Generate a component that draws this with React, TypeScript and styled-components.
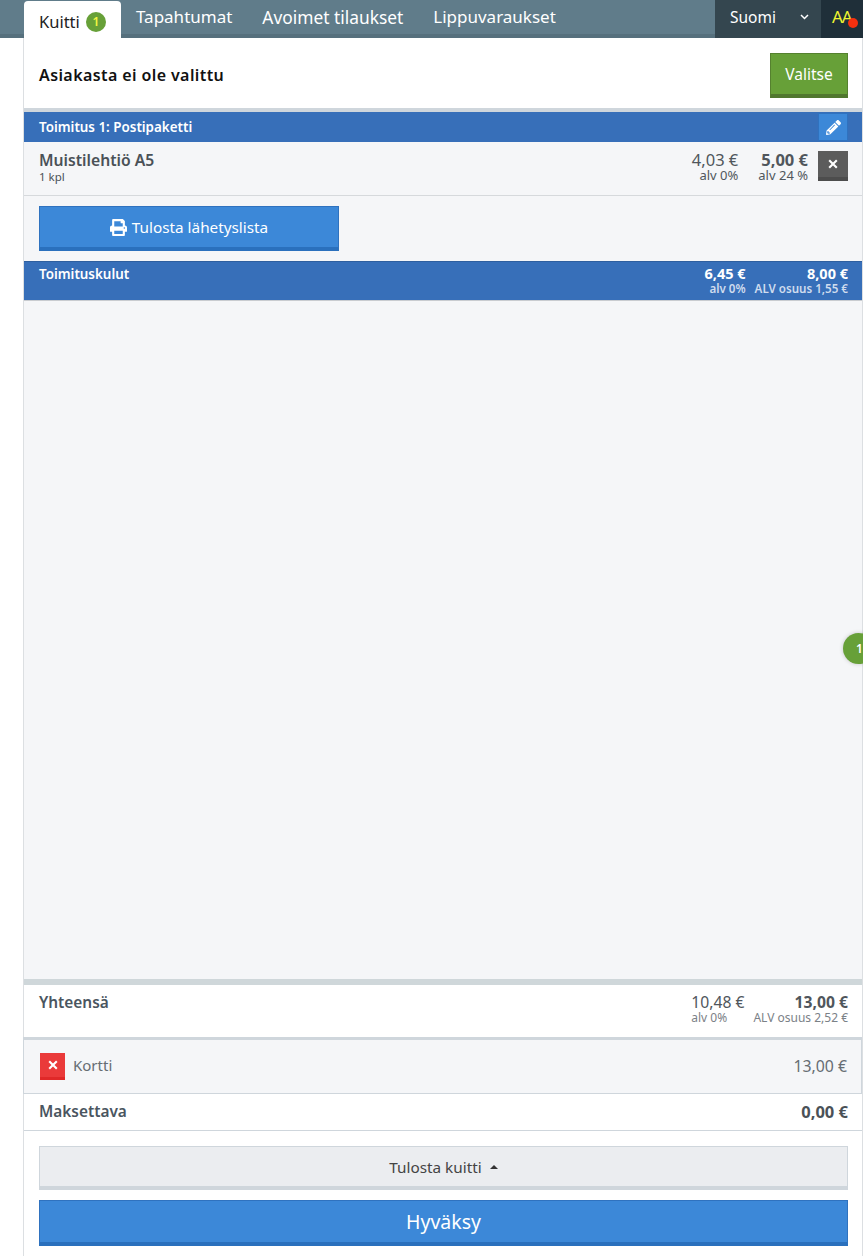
// App.tsx
import React from "react";
import styled, { createGlobalStyle } from "styled-components";
import { FaPrint, FaPencilAlt } from "react-icons/fa";

const GlobalStyle = createGlobalStyle`
  html, body {
    margin: 0;
    padding: 0;
    background: #fff;
    font-family: "Noto Sans", "Open Sans", Arial, sans-serif;
  }
  * { box-sizing: border-box; }
`;

const Page = styled.div`
  position: relative;
  width: 863px;
  height: 1256px;
  display: flex;
  flex-direction: column;
  overflow: hidden;
`;

// Ylapalkki
const TopBar = styled.div`
  height: 38px;
  flex: none;
  display: flex;
  align-items: stretch;
  background: #607c8a;
  border-bottom: 4px solid #56707d;
  padding-left: 24px;
`;

const ActiveTab = styled.div`
  width: 97px;
  height: 37px;
  margin-top: 1px;
  padding: 4px 0 0 15px;
  display: flex;
  align-items: center;
  gap: 6px;
  flex: none;
  background: #fff;
  border-radius: 4px 4px 0 0;
  color: #222;
  font-size: 16.5px;
  position: relative;
  z-index: 1;
`;

const TabBadge = styled.span`
  width: 20px;
  height: 20px;
  border-radius: 50%;
  background: #67a038;
  color: #f2f542;
  font-size: 12px;
  font-weight: 600;
  display: flex;
  align-items: center;
  justify-content: center;
`;

const Tab = styled.div<{ $gap: number; $size?: number }>`
  color: #fff;
  font-size: ${(props) => props.$size || 17}px;
  line-height: 34px;
  margin-left: ${(props) => props.$gap}px;
  flex: none;
`;

const LangSelect = styled.div`
  margin-left: auto;
  width: 106px;
  height: 38px;
  padding: 0 12px 4px 15px;
  display: flex;
  align-items: center;
  justify-content: space-between;
  background: #34464f;
  color: #fff;
  font-size: 15.5px;
`;

const ContrastButton = styled.div`
  position: relative;
  width: 42px;
  height: 38px;
  padding: 6px 0 0 11px;
  background: #1f2f39;
  color: #eef52f;
  font-size: 17px;
  letter-spacing: -1px;
  line-height: 22px;
`;

const RedDot = styled.span`
  position: absolute;
  left: 27px;
  top: 18px;
  width: 10px;
  height: 10px;
  border-radius: 50%;
  background: #f5300f;
`;

// Paasisalto
const Receipt = styled.div`
  flex: 1;
  margin-left: 23px;
  display: flex;
  flex-direction: column;
  border-left: 1px solid #dcdfe2;
  border-right: 1px solid #dcdfe2;
  min-height: 0;
`;

const CustomerRow = styled.div`
  height: 74px;
  flex: none;
  padding: 15px 14px 0 15px;
  display: flex;
  align-items: flex-start;
  justify-content: space-between;
  background: #fff;
  border-bottom: 4px solid #cfd6dc;
`;

const CustomerName = styled.div`
  font-size: 16px;
  font-weight: 600;
  color: #111;
  line-height: 44px;
  letter-spacing: 0.4px;
`;

const GreenButton = styled.div`
  width: 78px;
  height: 45px;
  background: #67a038;
  border: 1px solid #55812f;
  border-bottom: 4px solid #50772e;
  color: #fff;
  font-size: 15.5px;
  display: flex;
  align-items: center;
  justify-content: center;
`;

const DeliveryHeader = styled.div`
  height: 30px;
  flex: none;
  padding: 0 14px 0 15px;
  display: flex;
  align-items: center;
  justify-content: space-between;
  background: #376fb9;
  color: #fff;
  font-size: 13.4px;
  font-weight: 600;
`;

const EditButton = styled.div`
  width: 30px;
  height: 28px;
  margin-bottom: 1px;
  align-self: flex-end;
  background: #3c88d8;
  border: 1px solid #2f72bf;
  color: #fff;
  font-size: 15px;
  display: flex;
  align-items: center;
  justify-content: center;
`;

const ProductRow = styled.div`
  height: 54px;
  flex: none;
  padding: 9px 14px 0 15px;
  display: flex;
  align-items: flex-start;
  background: #f5f6f8;
  border-bottom: 1px solid #d6d9dc;
`;

const ProductInfo = styled.div`
  flex: 1;
  color: #4a5157;
`;

const ProductName = styled.div`
  font-size: 15.7px;
  font-weight: 600;
  line-height: 19px;
`;

const ProductQty = styled.div`
  font-size: 11.5px;
  line-height: 14px;
`;

const PriceCell = styled.div`
  display: flex;
  flex-direction: column;
  align-items: ${(props: { $align?: string }) => props.$align || "flex-end"};
  flex: none;
  white-space: nowrap;
`;

const PriceValue = styled.div<{ $bold?: boolean; $size?: number }>`
  font-size: ${(props) => props.$size || 16}px;
  font-weight: ${(props) => (props.$bold ? 700 : 400)};
  line-height: 17px;
`;

const PriceNote = styled.div`
  font-size: 13px;
  line-height: 14px;
`;

const ProductPrices = styled.div`
  display: flex;
  gap: 20px;
  color: #50565c;
  margin-right: 10px;
`;

const RemoveButton = styled.div`
  width: 30px;
  height: 30px;
  background: #5c5c5c;
  border-bottom: 4px solid #4d4d4d;
  display: flex;
  align-items: center;
  justify-content: center;
`;

const PrintArea = styled.div`
  height: 65px;
  flex: none;
  padding: 10px 15px 0;
  background: #f5f6f8;
`;

const BlueButton = styled.div<{ $width: string; $height: number; $size: number }>`
  width: ${(props) => props.$width};
  height: ${(props) => props.$height}px;
  flex: none;
  background: #3c88d8;
  border: 1px solid #2f72bf;
  border-bottom: 4px solid #2a70bd;
  color: #fff;
  font-size: ${(props) => props.$size}px;
  display: flex;
  align-items: center;
  justify-content: center;
  gap: 5px;
`;

const ShippingRow = styled.div`
  height: 40px;
  flex: none;
  padding: 3px 14px 0 15px;
  display: flex;
  align-items: flex-start;
  justify-content: space-between;
  background: #376fb9;
  border-top: 1px solid #2e5f9f;
  border-bottom: 1px solid #c9ccd0;
  color: #fff;
`;

const ShippingTitle = styled.div`
  font-size: 13.4px;
  font-weight: 600;
  line-height: 18px;
`;

const ShippingPrices = styled.div`
  display: flex;
  gap: 9px;
`;

const ShippingNote = styled(PriceNote)`
  font-size: 11.6px;
  line-height: 13px;
  color: #cfdcee;
  font-weight: 600;
`;

const Filler = styled.div`
  flex: 1;
  background: #f5f6f8;
  border-bottom: 6px solid #cfd7da;
`;

const TotalRow = styled.div`
  height: 52px;
  flex: none;
  padding: 9px 14px 0 15px;
  display: flex;
  justify-content: space-between;
  align-items: flex-start;
  background: #fff;
`;

const RowLabel = styled.div`
  font-size: 15.4px;
  font-weight: 600;
  line-height: 18px;
  color: #4a5560;
`;

const TotalPrices = styled.div`
  display: flex;
  gap: 9px;
  color: #50565c;
`;

const TotalNote = styled(PriceNote)`
  font-size: 12px;
  color: #7b8187;
`;

const PaymentRow = styled.div`
  height: 57px;
  flex: none;
  padding: 0 14px 1px 16px;
  display: flex;
  align-items: center;
  gap: 8px;
  background: #f5f6f8;
  border: 1px solid #cfd6dc;
  border-top-width: 3px;
  margin-left: -1px;
  color: #666d73;
  font-size: 15px;
`;

const PaymentRemove = styled.div`
  width: 25px;
  height: 27px;
  background: #ea3a3a;
  border-bottom: 3px solid #e02828;
  display: flex;
  align-items: center;
  justify-content: center;
`;

const PaymentLabel = styled.span`
  margin-top: -2px;
`;

const PaymentAmount = styled.div`
  margin-left: auto;
  font-size: 15.8px;
  color: #666d73;
`;

const DueRow = styled.div`
  height: 37px;
  flex: none;
  padding: 0 14px 0 15px;
  display: flex;
  align-items: center;
  justify-content: space-between;
  background: #fff;
  border-bottom: 1px solid #cfd6dc;
`;

const DueAmount = styled.div`
  font-size: 16.5px;
  font-weight: 700;
  line-height: 18px;
  color: #4a5157;
`;

const ActionArea = styled.div`
  height: 125px;
  flex: none;
  padding: 15px 14px 0 15px;
  display: flex;
  flex-direction: column;
  gap: 10px;
  background: #fff;
`;

const GreyButton = styled.div`
  height: 44px;
  flex: none;
  background: #ebedf0;
  border: 1px solid #cfd6dc;
  border-bottom: 4px solid #cfd6dc;
  color: #444;
  font-size: 15.3px;
  display: flex;
  align-items: center;
  justify-content: center;
  gap: 8px;
`;

const Caret = styled.span`
  width: 0;
  height: 0;
  border-left: 4px solid transparent;
  border-right: 4px solid transparent;
  border-bottom: 4px solid #333;
`;

const FloatBadge = styled.div`
  position: absolute;
  left: 843px;
  top: 633px;
  width: 31px;
  height: 31px;
  border-radius: 50%;
  background: #67a038;
  box-shadow: 0 0 4px rgba(0, 0, 0, 0.2);
  color: #fff;
  font-size: 12px;
  font-weight: 600;
  padding-left: 13px;
  line-height: 31px;
`;

const CrossIcon: React.FC<{ size: number }> = ({ size }) => (
  <svg width={size} height={size} viewBox="0 0 10 10">
    <path d="M1.2 1.2 8.8 8.8M8.8 1.2 1.2 8.8" stroke="#fff" strokeWidth="2.1" fill="none" />
  </svg>
);

const App: React.FC = () => {
  return (
    <Page>
      <GlobalStyle />
      <TopBar>
        <ActiveTab>
          Kuitti <TabBadge>1</TabBadge>
        </ActiveTab>
        <Tab $gap={15}>Tapahtumat</Tab>
        <Tab $gap={30} $size={17.35}>Avoimet tilaukset</Tab>
        <Tab $gap={30}>Lippuvaraukset</Tab>
        <LangSelect>
          Suomi
          <svg width="9" height="6" viewBox="0 0 9 6">
            <path d="M1 1 4.5 4.5 8 1" stroke="#fff" strokeWidth="1.5" fill="none" />
          </svg>
        </LangSelect>
        <ContrastButton>
          AA
          <RedDot />
        </ContrastButton>
      </TopBar>

      <Receipt>
        <CustomerRow>
          <CustomerName>Asiakasta ei ole valittu</CustomerName>
          <GreenButton>Valitse</GreenButton>
        </CustomerRow>

        <DeliveryHeader>
          Toimitus 1: Postipaketti
          <EditButton>
            <FaPencilAlt />
          </EditButton>
        </DeliveryHeader>

        <ProductRow>
          <ProductInfo>
            <ProductName>Muistilehtiö A5</ProductName>
            <ProductQty>1 kpl</ProductQty>
          </ProductInfo>
          <ProductPrices>
            <PriceCell>
              <PriceValue $size={16.5}>4,03 €</PriceValue>
              <PriceNote>alv 0%</PriceNote>
            </PriceCell>
            <PriceCell>
              <PriceValue $bold $size={16.5}>5,00 €</PriceValue>
              <PriceNote>alv 24 %</PriceNote>
            </PriceCell>
          </ProductPrices>
          <RemoveButton>
            <CrossIcon size={10} />
          </RemoveButton>
        </ProductRow>

        <PrintArea>
          <BlueButton $width="300px" $height={45} $size={15.3}>
            <FaPrint size={17} /> Tulosta lähetyslista
          </BlueButton>
        </PrintArea>

        <ShippingRow>
          <ShippingTitle>Toimituskulut</ShippingTitle>
          <ShippingPrices>
            <PriceCell>
              <PriceValue $bold $size={14.5}>6,45 €</PriceValue>
              <ShippingNote>alv 0%</ShippingNote>
            </PriceCell>
            <PriceCell>
              <PriceValue $bold $size={14.5}>8,00 €</PriceValue>
              <ShippingNote>ALV osuus 1,55 €</ShippingNote>
            </PriceCell>
          </ShippingPrices>
        </ShippingRow>

        <Filler />

        <TotalRow>
          <RowLabel>Yhteensä</RowLabel>
          <TotalPrices>
            <PriceCell $align="flex-start">
              <PriceValue $size={15.7}>10,48 €</PriceValue>
              <TotalNote>alv 0%</TotalNote>
            </PriceCell>
            <PriceCell>
              <PriceValue $bold $size={15.7}>13,00 €</PriceValue>
              <TotalNote>ALV osuus 2,52 €</TotalNote>
            </PriceCell>
          </TotalPrices>
        </TotalRow>

        <PaymentRow>
          <PaymentRemove>
            <CrossIcon size={10} />
          </PaymentRemove>
          <PaymentLabel>Kortti</PaymentLabel>
          <PaymentAmount>13,00 €</PaymentAmount>
        </PaymentRow>

        <DueRow>
          <RowLabel>Maksettava</RowLabel>
          <DueAmount>0,00 €</DueAmount>
        </DueRow>

        <ActionArea>
          <GreyButton>
            Tulosta kuitti <Caret />
          </GreyButton>
          <BlueButton $width="100%" $height={46} $size={19.5}>
            Hyväksy
          </BlueButton>
        </ActionArea>
      </Receipt>

      <FloatBadge>1</FloatBadge>
    </Page>
  );
};

export default App;
